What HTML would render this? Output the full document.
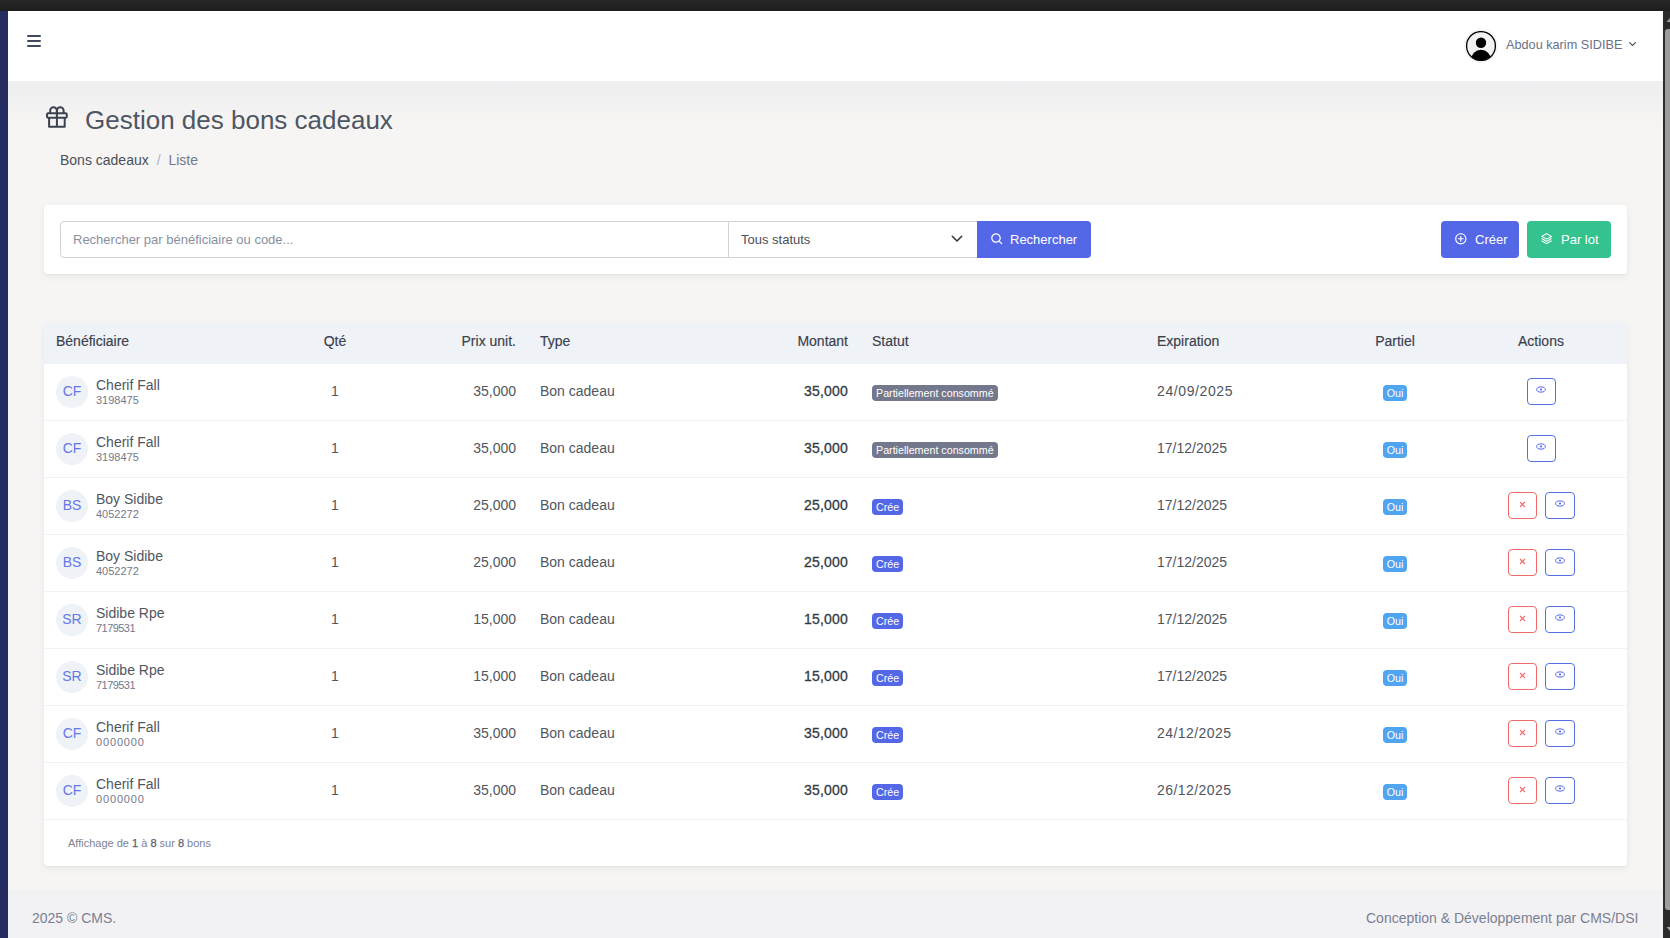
<!DOCTYPE html>
<html><head><meta charset="utf-8">
<style>
*{box-sizing:border-box;margin:0;padding:0}
html,body{width:1670px;height:938px;overflow:hidden}
body{font-family:"Liberation Sans",sans-serif;background:#f6f5f3;color:#495057;position:relative}
.abs{position:absolute}
#topbar{left:0;top:0;width:1670px;height:11px;background:linear-gradient(#262626,#1e1e1e)}
#side{left:0;top:11px;width:8px;height:927px;background:#242c61}
#scroll{left:1663px;top:11px;width:7px;height:927px;background:#2b2b2b}
#thumb{left:1665px;top:29px;width:5px;height:881px;background:#9e9e9e;border-radius:3px 0 0 3px}
#header{left:8px;top:11px;width:1655px;height:70px;background:#fff}
#footer{left:8px;top:890px;width:1655px;height:48px;background:#f2f2f5}
.ham{left:27px;width:14px;height:2.2px;background:#414a5c;border-radius:1px}
.txt{white-space:nowrap;line-height:1}
.card{background:#fff;border-radius:4px;box-shadow:0 1px 2px rgba(0,0,0,.04),0 3px 9px rgba(18,38,63,.05)}
.input{border:1px solid #ced4da;background:#fff}
.btn{color:#fff;font-size:13px;border-radius:4px}
table{border-collapse:collapse;table-layout:fixed;width:1583px}
th{background:#eff2f7;height:41.5px;padding-bottom:3px !important;font-size:14px;font-weight:normal;color:#3a404c;-webkit-text-stroke:0.15px #3a404c;padding:0 12px;text-align:left}
td{height:57px;border-top:1px solid #eff2f7;font-size:14px;padding:0 12px 2px;color:#50565f}
.dt{letter-spacing:0.6px}
.dt2{letter-spacing:0.45px}
.act.d + .act{width:30px}
.bb{font-weight:normal;color:#5b6170;-webkit-text-stroke:0.25px #5b6170}
.c{text-align:center}.r{text-align:right}
.av{display:inline-block;position:relative;top:1px;width:32px;height:32px;border-radius:50%;background:#eff2f7;color:#6378e8;font-size:14px;line-height:30px;text-align:center;vertical-align:middle}
.nm{display:inline-block;vertical-align:middle;margin-left:8px;line-height:1;position:relative;top:1px}
.nm b{font-weight:normal;font-size:14px;color:#50565f;display:block}
.nm i{font-style:normal;font-size:11px;color:#74788d;display:block;margin-top:3px}
.mt{font-weight:normal;color:#343a40;-webkit-text-stroke:0.3px #343a40;letter-spacing:0.2px}
tbody tr:last-child td{border-bottom:1px solid #eff2f7}
.badge{display:inline-block;color:#fff;font-size:10.7px;padding:2px 4px;border-radius:4px;line-height:12px;height:16px;vertical-align:middle;position:relative;top:1px}
.b-sec{background:#74788d}
.b-pri{background:#5468e7}
.b-info{background:#50a5f1}
.act{display:inline-block;width:29px;height:27px;border:1px solid #556ee6;border-radius:4px;vertical-align:middle;position:relative}
.act.d{border-color:#f46a6a;margin-right:8px}
.act svg{position:absolute;left:50%;top:50%}
.eye{margin:-5px 0 0 -5px}
.xx{margin:-4.5px 0 0 -3.5px}
</style></head><body>
<div id="topbar" class="abs"></div>
<div class="abs" style="left:8px;top:81px;width:1655px;height:45px;background:linear-gradient(#efeef0,#f6f5f3)"></div>
<div id="header" class="abs"></div>
<div id="side" class="abs"></div>
<div id="footer" class="abs"></div>
<div id="scroll" class="abs"></div>
<div id="thumb" class="abs"></div>
<svg class="abs" style="left:1663px;top:15px" width="7" height="8" viewBox="0 0 7 8"><path d="M7 3L3.5 7H7Z" fill="#a3a3a3"/></svg>
<svg class="abs" style="left:1663px;top:926px" width="7" height="8" viewBox="0 0 7 8"><path d="M7 1L3.5 1L7 5Z" fill="#a3a3a3"/></svg>

<!-- header content -->
<div class="abs ham" style="top:35px"></div>
<div class="abs ham" style="top:40px"></div>
<div class="abs ham" style="top:45px"></div>

<svg class="abs" style="left:1463px;top:28px" width="36" height="36" viewBox="0 0 36 36">
<circle cx="18" cy="18" r="17" fill="#f4f4f4"/>
</svg>
<svg class="abs" style="left:1466px;top:31px" width="30" height="30" viewBox="0 0 30 30">
<defs><clipPath id="avc"><circle cx="15" cy="15" r="14.3"/></clipPath></defs>
<circle cx="15" cy="15" r="14.4" fill="#f2f2f2" stroke="#000" stroke-width="1.3"/>
<circle cx="15" cy="11.8" r="5.2" fill="#000"/>
<ellipse cx="15" cy="29" rx="10" ry="10.2" fill="#000" clip-path="url(#avc)"/>
</svg>
<svg class="abs" style="left:1628px;top:41px" width="9" height="6" viewBox="0 0 9 6"><path d="M1.3 1.3L4.5 4.5L7.7 1.3" fill="none" stroke="#495057" stroke-width="1.2"/></svg>
<div class="abs txt" style="left:1506px;top:39px;font-size:12.7px;color:#6a7187">Abdou karim SIDIBE</div>

<!-- title -->
<svg class="abs" style="left:46px;top:106px" width="22" height="22" viewBox="0 0 22 22" fill="none" stroke="#3b414d" stroke-width="2" stroke-linejoin="round">
<rect x="1" y="7.3" width="19.8" height="4.4" rx="1.2"/>
<path d="M3.1 11.7V20.8H18.7V11.7"/>
<path d="M10.9 7.3V20.8"/>
<path d="M4.2 7.3V4.6A3.35 3.35 0 0 1 10.9 4.6V7.3"/>
<path d="M10.9 7.3V4.6A3.35 3.35 0 0 1 17.6 4.6V7.3"/>
</svg>
<div class="abs txt" style="left:85px;top:107px;font-size:26px;color:#4f5663">Gestion des bons cadeaux</div>
<div class="abs txt" style="left:60px;top:153px;font-size:14px;color:#495057">Bons cadeaux <span style="color:#b0b4c0;padding:0 4px">/</span> <span style="color:#74788d">Liste</span></div>

<!-- search card -->
<div class="abs card" style="left:44px;top:205px;width:1583px;height:69px"></div>
<div class="abs input" style="left:60px;top:221px;width:669px;height:37px;border-radius:4px 0 0 4px"></div>
<div class="abs txt" style="left:73px;top:233px;font-size:13px;color:#8a8fa0">Rechercher par bénéficiaire ou code...</div>
<div class="abs input" style="left:728px;top:221px;width:250px;height:37px;border-left:1px solid #ced4da"></div>
<div class="abs txt" style="left:741px;top:233px;font-size:13px;color:#495057">Tous statuts</div>
<svg class="abs" style="left:950px;top:234px" width="14" height="10" viewBox="0 0 14 10"><path d="M2.3 2.3L7 7L11.7 2.3" fill="none" stroke="#343a40" stroke-width="1.6" stroke-linecap="round" stroke-linejoin="round"/></svg>
<div class="abs btn" style="left:977px;top:221px;width:114px;height:37px;background:#5468e7;border-radius:0 4px 4px 0"></div>
<div class="abs txt" style="left:1010px;top:233px;font-size:13px;color:#fff">Rechercher</div>
<svg class="abs" style="left:989.8px;top:231.8px" width="14.4" height="14.4" viewBox="0 0 24 24" fill="#fff"><path d="M10 18a7.952 7.952 0 0 0 4.897-1.688l4.396 4.396 1.414-1.414-4.396-4.396A7.952 7.952 0 0 0 18 10c0-4.411-3.589-8-8-8s-8 3.589-8 8 3.589 8 8 8zm0-14c3.309 0 6 2.691 6 6s-2.691 6-6 6-6-2.691-6-6 2.691-6 6-6z"/></svg>
<div class="abs btn" style="left:1441px;top:221px;width:78px;height:37px;background:#5468e7"></div>
<div class="abs txt" style="left:1475px;top:233px;font-size:13px;color:#fff">Créer</div>
<svg class="abs" style="left:1454.4px;top:231.9px" width="13.6" height="13.6" viewBox="0 0 24 24" fill="#fff"><path d="M12 2C6.486 2 2 6.486 2 12s4.486 10 10 10 10-4.486 10-10S17.514 2 12 2zm0 18c-4.411 0-8-3.589-8-8s3.589-8 8-8 8 3.589 8 8-3.589 8-8 8z"/><path d="M13 7h-2v4H7v2h4v4h2v-4h4v-2h-4z"/></svg>
<div class="abs btn" style="left:1527px;top:221px;width:84px;height:37px;background:#34c38f"></div>
<div class="abs txt" style="left:1561px;top:233px;font-size:13px;color:#fff">Par lot</div>
<svg class="abs" style="left:1540.2px;top:231.9px" width="13.2" height="13.2" viewBox="0 0 24 24" fill="#fff"><path d="M22 7.999a1 1 0 0 0-.516-.874l-9.022-5a1.003 1.003 0 0 0-.968 0l-8.978 4.96a1 1 0 0 0-.003 1.748l9.022 5.04a.995.995 0 0 0 .973.001l8.978-5A1 1 0 0 0 22 7.999zm-9.977 3.855L5.06 7.965l6.917-3.822 6.964 3.859-6.918 3.852z"/><path d="M20.515 11.126 12 15.856l-8.515-4.73-.971 1.748 9 5a1 1 0 0 0 .971 0l9-5-.97-1.748z"/><path d="M20.515 15.126 12 19.856l-8.515-4.73-.971 1.748 9 5a1 1 0 0 0 .971 0l9-5-.97-1.748z"/></svg>

<!-- table card -->
<div class="abs card" style="left:44px;top:322px;width:1583px;height:544px;overflow:hidden;border-radius:0 0 4px 4px">
<table id="tbl">
<colgroup><col style="width:226px"><col style="width:130px"><col style="width:128px"><col style="width:212px"><col style="width:120px"><col style="width:285px"><col style="width:190px"><col style="width:120px"><col style="width:172px"></colgroup>
<thead><tr><th>Bénéficiaire</th><th class="c">Qté</th><th class="r">Prix unit.</th><th>Type</th><th class="r">Montant</th><th>Statut</th><th>Expiration</th><th class="c">Partiel</th><th class="c">Actions</th></tr></thead>
<tbody id="tb">
<tr><td><span class="av">CF</span><span class="nm"><b>Cherif Fall</b><i>3198475</i></span></td><td class="c">1</td><td class="r">35,000</td><td>Bon cadeau</td><td class="r mt">35,000</td><td><span class="badge b-sec">Partiellement consommé</span></td><td class="dt">24/09/2025</td><td class="c"><span class="badge b-info">Oui</span></td><td class="c"><span class="act"><svg class="eye" width="10" height="7" viewBox="0 0 10 7"><ellipse cx="5" cy="3.5" rx="4.3" ry="2.6" fill="none" stroke="#5468e7" stroke-width="1"/><circle cx="5" cy="3.5" r="1.1" fill="#5468e7"/></svg></span></td></tr>
<tr><td><span class="av">CF</span><span class="nm"><b>Cherif Fall</b><i>3198475</i></span></td><td class="c">1</td><td class="r">35,000</td><td>Bon cadeau</td><td class="r mt">35,000</td><td><span class="badge b-sec">Partiellement consommé</span></td><td>17/12/2025</td><td class="c"><span class="badge b-info">Oui</span></td><td class="c"><span class="act"><svg class="eye" width="10" height="7" viewBox="0 0 10 7"><ellipse cx="5" cy="3.5" rx="4.3" ry="2.6" fill="none" stroke="#5468e7" stroke-width="1"/><circle cx="5" cy="3.5" r="1.1" fill="#5468e7"/></svg></span></td></tr>
<tr><td><span class="av">BS</span><span class="nm"><b>Boy Sidibe</b><i>4052272</i></span></td><td class="c">1</td><td class="r">25,000</td><td>Bon cadeau</td><td class="r mt">25,000</td><td><span class="badge b-pri">Crée</span></td><td>17/12/2025</td><td class="c"><span class="badge b-info">Oui</span></td><td class="c"><span class="act d"><svg class="xx" width="7" height="7" viewBox="0 0 7 7"><path d="M1 1L6 6M6 1L1 6" stroke="#f46a6a" stroke-width="1.1"/></svg></span><span class="act"><svg class="eye" width="10" height="7" viewBox="0 0 10 7"><ellipse cx="5" cy="3.5" rx="4.3" ry="2.6" fill="none" stroke="#5468e7" stroke-width="1"/><circle cx="5" cy="3.5" r="1.1" fill="#5468e7"/></svg></span></td></tr>
<tr><td><span class="av">BS</span><span class="nm"><b>Boy Sidibe</b><i>4052272</i></span></td><td class="c">1</td><td class="r">25,000</td><td>Bon cadeau</td><td class="r mt">25,000</td><td><span class="badge b-pri">Crée</span></td><td>17/12/2025</td><td class="c"><span class="badge b-info">Oui</span></td><td class="c"><span class="act d"><svg class="xx" width="7" height="7" viewBox="0 0 7 7"><path d="M1 1L6 6M6 1L1 6" stroke="#f46a6a" stroke-width="1.1"/></svg></span><span class="act"><svg class="eye" width="10" height="7" viewBox="0 0 10 7"><ellipse cx="5" cy="3.5" rx="4.3" ry="2.6" fill="none" stroke="#5468e7" stroke-width="1"/><circle cx="5" cy="3.5" r="1.1" fill="#5468e7"/></svg></span></td></tr>
<tr><td><span class="av">SR</span><span class="nm"><b>Sidibe Rpe</b><i style="letter-spacing:-0.55px">7179531</i></span></td><td class="c">1</td><td class="r">15,000</td><td>Bon cadeau</td><td class="r mt">15,000</td><td><span class="badge b-pri">Crée</span></td><td>17/12/2025</td><td class="c"><span class="badge b-info">Oui</span></td><td class="c"><span class="act d"><svg class="xx" width="7" height="7" viewBox="0 0 7 7"><path d="M1 1L6 6M6 1L1 6" stroke="#f46a6a" stroke-width="1.1"/></svg></span><span class="act"><svg class="eye" width="10" height="7" viewBox="0 0 10 7"><ellipse cx="5" cy="3.5" rx="4.3" ry="2.6" fill="none" stroke="#5468e7" stroke-width="1"/><circle cx="5" cy="3.5" r="1.1" fill="#5468e7"/></svg></span></td></tr>
<tr><td><span class="av">SR</span><span class="nm"><b>Sidibe Rpe</b><i style="letter-spacing:-0.55px">7179531</i></span></td><td class="c">1</td><td class="r">15,000</td><td>Bon cadeau</td><td class="r mt">15,000</td><td><span class="badge b-pri">Crée</span></td><td>17/12/2025</td><td class="c"><span class="badge b-info">Oui</span></td><td class="c"><span class="act d"><svg class="xx" width="7" height="7" viewBox="0 0 7 7"><path d="M1 1L6 6M6 1L1 6" stroke="#f46a6a" stroke-width="1.1"/></svg></span><span class="act"><svg class="eye" width="10" height="7" viewBox="0 0 10 7"><ellipse cx="5" cy="3.5" rx="4.3" ry="2.6" fill="none" stroke="#5468e7" stroke-width="1"/><circle cx="5" cy="3.5" r="1.1" fill="#5468e7"/></svg></span></td></tr>
<tr><td><span class="av">CF</span><span class="nm"><b>Cherif Fall</b><i style="letter-spacing:0.85px">0000000</i></span></td><td class="c">1</td><td class="r">35,000</td><td>Bon cadeau</td><td class="r mt">35,000</td><td><span class="badge b-pri">Crée</span></td><td class="dt2">24/12/2025</td><td class="c"><span class="badge b-info">Oui</span></td><td class="c"><span class="act d"><svg class="xx" width="7" height="7" viewBox="0 0 7 7"><path d="M1 1L6 6M6 1L1 6" stroke="#f46a6a" stroke-width="1.1"/></svg></span><span class="act"><svg class="eye" width="10" height="7" viewBox="0 0 10 7"><ellipse cx="5" cy="3.5" rx="4.3" ry="2.6" fill="none" stroke="#5468e7" stroke-width="1"/><circle cx="5" cy="3.5" r="1.1" fill="#5468e7"/></svg></span></td></tr>
<tr><td><span class="av">CF</span><span class="nm"><b>Cherif Fall</b><i style="letter-spacing:0.85px">0000000</i></span></td><td class="c">1</td><td class="r">35,000</td><td>Bon cadeau</td><td class="r mt">35,000</td><td><span class="badge b-pri">Crée</span></td><td class="dt2">26/12/2025</td><td class="c"><span class="badge b-info">Oui</span></td><td class="c"><span class="act d"><svg class="xx" width="7" height="7" viewBox="0 0 7 7"><path d="M1 1L6 6M6 1L1 6" stroke="#f46a6a" stroke-width="1.1"/></svg></span><span class="act"><svg class="eye" width="10" height="7" viewBox="0 0 10 7"><ellipse cx="5" cy="3.5" rx="4.3" ry="2.6" fill="none" stroke="#5468e7" stroke-width="1"/><circle cx="5" cy="3.5" r="1.1" fill="#5468e7"/></svg></span></td></tr>
</tbody>
</table>
<div class="txt" style="position:absolute;left:24px;top:516px;font-size:11px;color:#7d8294">Affichage de <b class="bb">1</b> à <b class="bb">8</b> sur <b class="bb">8</b> bons</div>
</div>

<div class="abs txt" style="left:32px;top:911px;font-size:14px;color:#7b8091">2025 © CMS.</div>
<div class="abs txt" style="left:1366px;top:911px;font-size:14px;color:#7b8091">Conception &amp; Développement par CMS/DSI</div>
</body></html>
